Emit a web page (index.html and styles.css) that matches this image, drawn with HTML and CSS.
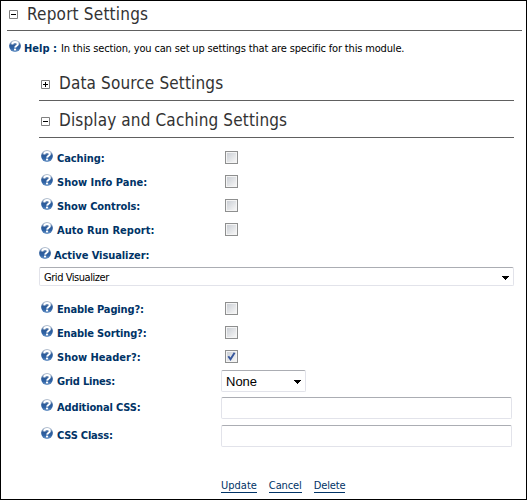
FILE: index.html
```
<!DOCTYPE html>
<html lang="en">
<head>
<meta charset="utf-8">
<title>Report Settings</title>
<link rel="stylesheet" href="styles.css">
</head>
<body>
<svg class="defs" width="0" height="0" aria-hidden="true">
  <defs>
    <linearGradient id="ball" x1="0" y1="0" x2="0" y2="1">
      <stop offset="0" stop-color="#b9c3d0"/>
      <stop offset=".22" stop-color="#8fa6c4"/>
      <stop offset=".42" stop-color="#2c5a98"/>
      <stop offset=".7" stop-color="#2f63a5"/>
      <stop offset="1" stop-color="#6d97c8"/>
    </linearGradient>
    <symbol id="help" viewBox="0 0 12 12">
      <circle cx="6" cy="6" r="5.9" fill="url(#ball)"/>
      <path d="M3.2 4.4C3.4 2.8 4.6 2.1 6.1 2.1C7.8 2.1 8.8 3 8.8 4.2C8.8 5.7 6.4 5.8 6.1 7.6" fill="none" stroke="#fff" stroke-width="2"/>
      <rect x="5" y="8.6" width="2.1" height="1.8" fill="#fff"/>
    </symbol>
    <symbol id="minus" viewBox="0 0 9 9">
      <path d="M.5.5h8v8h-8z" fill="#fff" stroke="#808080"/>
      <path d="M2 4.5h5" stroke="#000"/>
    </symbol>
    <symbol id="plus" viewBox="0 0 9 9">
      <path d="M.5.5h8v8h-8z" fill="#fff" stroke="#808080"/>
      <path d="M2 4.5h5M4.5 2v5" stroke="#000"/>
    </symbol>
    <symbol id="arrow" viewBox="0 0 7 4">
      <path d="M0 0h7v1h-1v1h-1v1h-1v1h-1v-1h-1v-1h-1v-1h-1z" fill="#000"/>
    </symbol>
  </defs>
</svg>
<main class="page">
  <h1 class="head head-main"><svg class="toggle"><use href="#minus"/></svg><span class="t-report">Report Settings</span></h1>
  <p class="intro"><svg class="help"><use href="#help"/></svg><b class="label t-help">Help :</b><span class="t-intro">In this section, you can set up settings that are specific for this module.</span></p>
  <section class="inner">
    <h2 class="head head-data"><svg class="toggle"><use href="#plus"/></svg><span class="t-data">Data Source Settings</span></h2>
    <h2 class="head head-display"><svg class="toggle"><use href="#minus"/></svg><span class="t-display">Display and Caching Settings</span></h2>
    <div class="group first">
      <div class="row"><svg class="help"><use href="#help"/></svg><span class="label"><span class="t-caching">Caching:</span></span><span class="check"></span></div>
      <div class="row"><svg class="help"><use href="#help"/></svg><span class="label"><span class="t-info">Show Info Pane:</span></span><span class="check"></span></div>
      <div class="row"><svg class="help"><use href="#help"/></svg><span class="label"><span class="t-controls">Show Controls:</span></span><span class="check"></span></div>
      <div class="row"><svg class="help"><use href="#help"/></svg><span class="label"><span class="t-auto">Auto Run Report:</span></span><span class="check"></span></div>
    </div>
    <div class="row visual"><svg class="help"><use href="#help"/></svg><span class="label"><span class="t-active">Active Visualizer:</span></span></div>
    <div class="field select wide"><span class="t-grid">Grid Visualizer</span><svg class="arrow"><use href="#arrow"/></svg></div>
    <div class="group second">
      <div class="row"><svg class="help"><use href="#help"/></svg><span class="label"><span class="t-paging">Enable Paging?:</span></span><span class="check"></span></div>
      <div class="row"><svg class="help"><use href="#help"/></svg><span class="label"><span class="t-sorting">Enable Sorting?:</span></span><span class="check"></span></div>
      <div class="row"><svg class="help"><use href="#help"/></svg><span class="label"><span class="t-header">Show Header?:</span></span><span class="check"><svg class="tick" viewBox="0 0 9 9"><path d="M1.3 4.2L3.5 7.3L7.6.8" fill="none" stroke="#36569c" stroke-width="1.9"/></svg></span></div>
      <div class="row"><svg class="help"><use href="#help"/></svg><span class="label"><span class="t-lines">Grid Lines:</span></span><span class="field select small"><span class="t-none">None</span><svg class="arrow"><use href="#arrow"/></svg></span></div>
      <div class="row tall"><svg class="help"><use href="#help"/></svg><span class="label"><span class="t-css">Additional CSS:</span></span><span class="field text"></span></div>
      <div class="row tall"><svg class="help"><use href="#help"/></svg><span class="label"><span class="t-class">CSS Class:</span></span><span class="field text"></span></div>
    </div>
    <nav class="links"><a class="t-update">Update</a><a class="t-cancel">Cancel</a><a class="t-delete">Delete</a></nav>
  </section>
</main>
</body>
</html>
```

FILE: styles.css
```
* { box-sizing: border-box; }
body { margin: 0; background: #fff; }
.defs { position: absolute; }
.page {
  width: 527px; height: 500px; border: 1px solid #000;
  padding: 0 4px 0 6px; overflow: hidden;
  font: 11px/14px "DejaVu Sans Condensed", "DejaVu Sans", sans-serif;
  color: #000; white-space: nowrap;
}
svg { flex: none; display: block; }
.head {
  display: flex; margin: 0; border-bottom: 1px solid #606060;
  font-size: 17px; line-height: 20px; font-weight: 400; color: #333;
}
.toggle { width: 9px; height: 9px; }
.head-main { height: 30px; padding-top: 3px; }
.head-main .toggle { margin: 6px 9px 0 2px; }
.intro { display: flex; height: 34px; margin: 0; padding: 11px 0 0 2px; }
.help { width: 12px; height: 12px; }
.intro .help { margin-top: -2px; }
.intro .label { flex: none; width: 37px; margin-left: 3px; }
.label { font-weight: 700; color: #003366; }
.inner { margin: 0 8px 0 32px; }
.head-data { height: 36px; padding-top: 8px; }
.head-display { height: 37px; padding-top: 9px; }
.head-data .toggle, .head-display .toggle { margin: 7px 9px 0 2px; }
.first { padding-top: 8px; }
.row { display: flex; height: 24px; padding-left: 2px; }
.row .help { margin-top: 4px; }
.row .label { width: 164px; margin-left: 4px; padding-top: 6px; }
.row .check { margin: 5px 0 0 4px; }
.check {
  width: 13px; height: 13px; border: 1px solid #8e8f8f; padding: 1px;
  background: linear-gradient(135deg, #cbcfd5, #f6f6f6) content-box, #f4f4f4;
}
.tick { width: 9px; height: 9px; }
.row.visual { height: 25px; padding-left: 0; }
.visual .help { margin-top: 5px; }
.visual .label { margin-left: 3px; padding-top: 7px; }
.field {
  display: flex; border: 1px solid #e2e3ea; border-top-color: #abadb3;
  border-radius: 2px; background: #fff;
}
.wide { height: 19px; padding: 3px 4px 0; }
.arrow { width: 7px; height: 4px; margin: 5px 0 0 auto; }
.second { padding-top: 11px; }
.small {
  width: 85px; height: 22px; margin-top: 1px; padding: 3px 4px 0;
  font: 13px/15px "Liberation Sans", Arial, sans-serif;
}
.small .arrow { margin-top: 6px; }
.row.tall { height: 28px; }
.tall .help { margin-top: 6px; }
.tall .label { padding-top: 8px; }
.text { width: 291px; height: 22px; margin-top: 4px; }
.links { display: flex; gap: 12px; padding: 30px 0 0 182px; }
.links a { color: #003366; border-bottom: 1px solid #003366; line-height: 14px; height: 14px; }

/* Tracking per text, to hold the narrow Tahoma-like measure */
.t-report { letter-spacing: .2px; }
.t-data, .t-display { letter-spacing: .14px; }
.t-intro { letter-spacing: -.16px; }
.t-grid { letter-spacing: -.45px; }
.t-caching, .t-active, .t-controls { letter-spacing: -.08px; }
.t-auto { letter-spacing: .06px; }
.t-paging, .t-sorting, .t-css { letter-spacing: -.15px; }
.t-lines, .t-class { letter-spacing: -.2px; }
.t-cancel, .t-delete { letter-spacing: -.12px; }
```
